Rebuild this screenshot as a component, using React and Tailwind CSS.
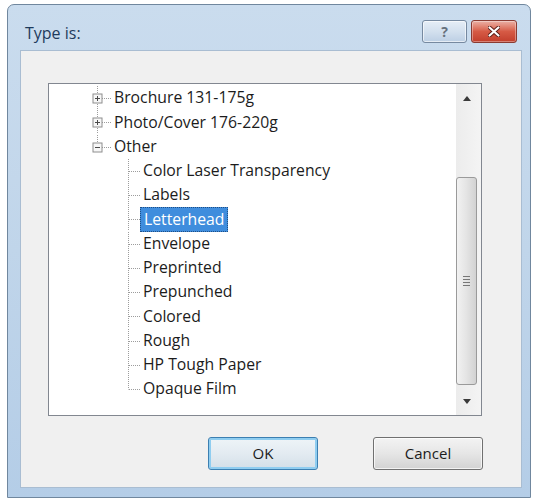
import { useState } from 'react'

const font = "font-['Open_Sans','Liberation_Sans',sans-serif]"

const treeRows = [
	{ label: 'Brochure 131-175g', level: 0, kind: 'plus' },
	{ label: 'Photo/Cover 176-220g', level: 0, kind: 'plus' },
	{ label: 'Other', level: 0, kind: 'minus', last: true },
	{ label: 'Color Laser Transparency', level: 1 },
	{ label: 'Labels', level: 1 },
	{ label: 'Letterhead', level: 1 },
	{ label: 'Envelope', level: 1 },
	{ label: 'Preprinted', level: 1 },
	{ label: 'Prepunched', level: 1 },
	{ label: 'Colored', level: 1 },
	{ label: 'Rough', level: 1 },
	{ label: 'HP Tough Paper', level: 1 },
	{ label: 'Opaque Film', level: 1, last: true },
]

function Gutter({ row }) {
	const line = { stroke: '#9c9c9c', strokeWidth: 1, strokeDasharray: '1 1' }

	if (row.level === 0) {
		return (
			<svg width="62" height="24" className="shrink-0">
				<line x1="48.5" y1="0" x2="48.5" y2={row.last ? 8 : 24} {...line} />
				<line x1="53" y1="12.5" x2="62" y2="12.5" {...line} />
				<rect x="44" y="8" width="9" height="9" fill="#f7f7f7" stroke="#8e8e8e" />
				<line x1="46" y1="12.5" x2="51" y2="12.5" stroke="#4a4a4a" />
				{row.kind === 'plus' && (
					<line x1="48.5" y1="10" x2="48.5" y2="15" stroke="#4a4a4a" />
				)}
			</svg>
		)
	}

	return (
		<svg width="91" height="24" className="shrink-0">
			<line x1="79.5" y1="0" x2="79.5" y2={row.last ? 12.5 : 24} {...line} />
			<line x1="80" y1="12.5" x2="91" y2="12.5" {...line} />
		</svg>
	)
}

function Scrollbar() {
	return (
		<div className="flex w-[25px] shrink-0 flex-col bg-gradient-to-r from-[#ececec] to-[#f4f4f4]">
			<div className="flex h-[28px] items-center justify-center pr-[4px]">
				<svg width="8" height="5">
					<path d="M0 5 L4 0 L8 5 Z" fill="#3a3a3a" />
				</svg>
			</div>
			<div className="flex-1 pt-[65px]">
				<div className="flex h-[208px] w-[21px] items-center justify-center rounded-[3px] border border-[#9a9a9a] bg-gradient-to-r from-[#f2f2f2] via-[#e4e4e4] to-[#d2d2d2]">
					<div className="flex flex-col gap-[2px]">
						<div className="h-px w-[7px] bg-[#777]" />
						<div className="h-px w-[7px] bg-[#777]" />
						<div className="h-px w-[7px] bg-[#777]" />
						<div className="h-px w-[7px] bg-[#777]" />
					</div>
				</div>
			</div>
			<div className="flex h-[28px] items-center justify-center pr-[4px]">
				<svg width="8" height="5">
					<path d="M0 0 L8 0 L4 5 Z" fill="#3a3a3a" />
				</svg>
			</div>
		</div>
	)
}

export default function App() {
	const [selected, setSelected] = useState('Letterhead')

	return (
		<div className={`h-[501px] w-[534px] bg-white pl-[7px] pt-[4px] ${font}`}>
			<div className="flex h-[494px] w-[524px] flex-col rounded-t-[7px] border border-[#70879e] bg-gradient-to-b from-[#cadcee] via-[#c0d5ea] to-[#b4cde7] pb-[9px] pl-[12px] pr-[8px]">
				<div className="flex h-[45px] shrink-0 items-end justify-between pb-[7px] pl-[5px] pr-[5px]">
					<span className="h-[20px] text-[16px] leading-[20px] text-[#1e3a5c]">Type is:</span>
					<div className="flex gap-[4px]">
						<div className="flex h-[23px] w-[45px] items-center justify-center rounded-[3px] border border-[#7689a0] bg-gradient-to-b from-[#e6eef7] via-[#d3e0ee] to-[#bccfe4] shadow-[inset_0_0_0_1px_rgba(255,255,255,0.6)]">
							<span className="text-[14px] font-bold leading-none text-[#66717d]">?</span>
						</div>
						<div className="flex h-[23px] w-[46px] items-center justify-center rounded-[3px] border border-[#8a3b32] bg-gradient-to-b from-[#eab0a5] via-[#d65a45] to-[#c23e2c] shadow-[inset_0_0_0_1px_rgba(255,255,255,0.35)]">
							<svg width="12" height="11">
								<path d="M1.5 1.5 L10.5 9.5 M10.5 1.5 L1.5 9.5" stroke="#5a1d16" strokeWidth="4" strokeLinecap="round" />
								<path d="M1.5 1.5 L10.5 9.5 M10.5 1.5 L1.5 9.5" stroke="#ffffff" strokeWidth="2.2" strokeLinecap="round" />
							</svg>
						</div>
					</div>
				</div>

				<div className="flex flex-1 flex-col border border-[#a9bdd2] bg-[#f0f0f0] pl-[27px] pt-[32px]">
					<div className="flex h-[333px] w-[434px] border border-[#828790] bg-white">
						<div className="flex-1 pt-[2px] text-[15.75px] text-[#1c1c1c]">
							{treeRows.map((row) => (
								<div key={row.label} className="flex h-[24.25px] items-center">
									<Gutter row={row} />
									<span
										onClick={() => setSelected(row.label)}
										className={`flex h-[25px] cursor-default items-center whitespace-nowrap px-[3px] leading-none ${
											selected === row.label
												? 'border border-dotted border-[#1f4f86] bg-[#3f8ddd] px-[2px] text-white'
												: ''
										}`}
									>
										{row.label}
									</span>
								</div>
							))}
						</div>
						<Scrollbar />
					</div>

					<div className="mt-[21px] flex gap-[55px] pl-[160px]">
						<button
							type="button"
							className="h-[33px] w-[110px] rounded-[3px] border border-[#3c7fb1] bg-gradient-to-b from-[#eef4f8] via-[#e3ebf1] to-[#d3dfe8] text-[15px] text-[#1c1c1c] shadow-[inset_0_0_0_2px_#8fcdf0]"
						>
							OK
						</button>
						<button
							type="button"
							className="h-[33px] w-[110px] rounded-[3px] border border-[#707070] bg-gradient-to-b from-[#f3f3f3] via-[#e6e6e6] to-[#d2d2d2] text-[15px] text-[#1c1c1c] shadow-[inset_0_0_0_1px_rgba(255,255,255,0.7)]"
						>
							Cancel
						</button>
					</div>
				</div>
			</div>
		</div>
	)
}
